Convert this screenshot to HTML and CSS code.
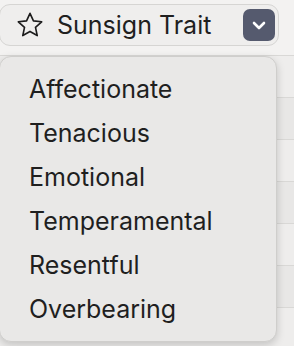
FILE: index.html
```html
<!DOCTYPE html>
<html lang="en">
<head>
    <meta charset="UTF-8">
    <meta name="viewport" content="width=device-width, initial-scale=1.0">
    <title>Sunsign Trait</title>
    <link rel="stylesheet" href="styles.css">
</head>
<body>
    <div class="picker">
        <button class="picker-btn">
            <svg class="star" width="28" height="28" viewBox="0 0 24 24">
                <path d="M12 2l2.95 6.5 7.05.75-5.3 4.8 1.5 7L12 17.5 5.8 21.05l1.5-7L2 9.25l7.05-.75z" fill="none" stroke="#1c1c1c" stroke-width="1.4" stroke-linejoin="round"/>
            </svg>
            <span class="label">Sunsign Trait</span>
            <span class="chevron">
                <svg width="16" height="16" viewBox="0 0 16 16">
                    <path d="M3 6l5 5 5-5" fill="none" stroke="#fff" stroke-width="2.6" stroke-linecap="round" stroke-linejoin="round"/>
                </svg>
            </span>
        </button>

        <div class="rows">
            <div class="row"></div>
            <div class="row"></div>
            <div class="row"></div>
            <div class="row"></div>
            <div class="row"></div>
            <div class="row"></div>
            <div class="row"></div>
        </div>

        <ul class="menu">
            <li>Affectionate</li>
            <li>Tenacious</li>
            <li>Emotional</li>
            <li>Temperamental</li>
            <li>Resentful</li>
            <li>Overbearing</li>
        </ul>
    </div>
</body>
</html>
```

FILE: styles.css
```css
*{
    margin: 0;
    padding: 0;
    box-sizing: border-box;
}

body{
    background-color: #f3f2f1;
    font-family: Inter, "Noto Sans", sans-serif;
    color: #1f1f1f;
    height: 346px;
    overflow: hidden;
}

.picker{
    position: relative;
    width: 294px;
    padding-top: 4px;
}

.picker-btn{
    display: flex;
    align-items: center;
    width: 280px;
    height: 42px;
    margin-left: -1px;
    padding: 0 3px 0 16px;
    background-color: #efeeed;
    border: 1px solid #d6d5d3;
    border-radius: 11px;
    font-family: inherit;
    color: inherit;
}

.star{
    flex: none;
}

.label{
    flex: 1;
    text-align: left;
    margin-left: 13px;
    font-size: 25px;
}

.chevron{
    display: flex;
    justify-content: center;
    align-items: center;
    width: 32px;
    height: 32px;
    border-radius: 7px;
    background-color: #555a6e;
}

.rows{
    margin-top: 9px;
}

.row{
    height: 42px;
    border-top: 1px solid #d9d8d6;
    background-color: #eeedec;
}

.row:nth-child(even){
    background-color: #e8e7e6;
}

.menu{
    position: absolute;
    top: 56px;
    left: -1px;
    width: 278px;
    height: 286px;
    list-style: none;
    padding-top: 10px;
    background-color: #e9e8e7;
    border: 1px solid #cfcecc;
    border-radius: 12px;
    box-shadow: 0 3px 8px rgba(0, 0, 0, 0.18);
}

.menu li{
    height: 44px;
    padding-left: 29px;
    font-size: 25px;
    line-height: 44px;
}
```
